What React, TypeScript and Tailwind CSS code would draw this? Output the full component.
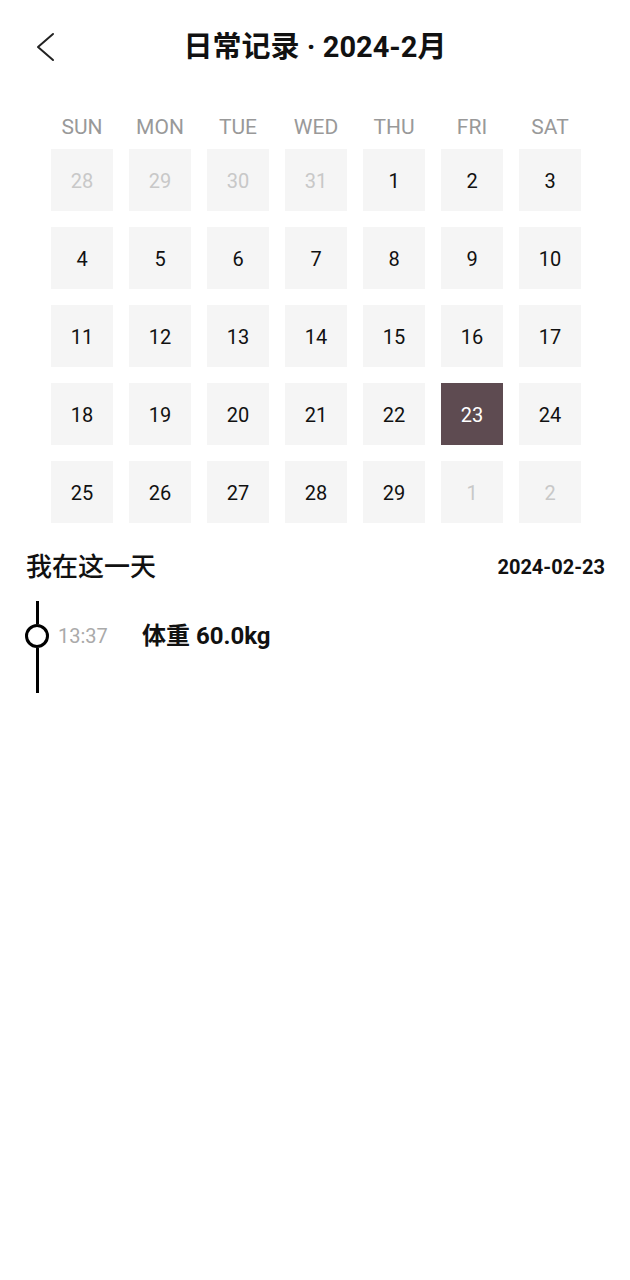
const WEEKDAYS = ['SUN', 'MON', 'TUE', 'WED', 'THU', 'FRI', 'SAT'];

type Day = { n: number; inMonth: boolean };

// 2024年2月，前后补齐相邻月份
const days: Day[] = [
  ...[28, 29, 30, 31].map((n) => ({ n, inMonth: false })),
  ...Array.from({ length: 29 }, (_, i) => ({ n: i + 1, inMonth: true })),
  ...[1, 2].map((n) => ({ n, inMonth: false })),
];

const SELECTED = 23;

function BackIcon() {
  return (
    <svg className="w-[20px] h-[30px]" viewBox="0 0 20 30" fill="none">
      <polyline points="17,2 2,15 17,28" stroke="#222" strokeWidth="2" strokeLinecap="round" strokeLinejoin="round" />
    </svg>
  );
}

export default function App() {
  return (
    <div
      className="min-h-[1280px] w-[630px] bg-white text-[#111]"
      style={{ fontFamily: 'Roboto, "Noto Sans CJK SC", sans-serif' }}
    >
      {/* 顶部标题栏 */}
      <div className="mt-4 grid h-[62px] grid-cols-[1fr_auto_1fr] items-center">
        <button className="ml-[36px] flex items-center justify-self-start">
          <BackIcon />
        </button>
        <h1 className="text-[29px] font-bold leading-none">日常记录 · 2024-2月</h1>
        <div />
      </div>

      {/* 日历 */}
      <div className="ml-[51px] mt-[35px]">
        <div className="grid grid-cols-[repeat(7,62px)] gap-x-4">
          {WEEKDAYS.map((w) => (
            <div key={w} className="flex h-[30px] items-center justify-center text-[21px] text-[#999]">
              {w}
            </div>
          ))}
        </div>
        <div className="mt-[6px] grid grid-cols-[repeat(7,62px)] gap-4">
          {days.map((d, i) => {
            const selected = d.inMonth && d.n === SELECTED;
            return (
              <div
                key={i}
                className={
                  selected
                    ? 'flex h-[62px] items-center justify-center bg-[#5e4b51] pt-[2px] text-[20px] text-white'
                    : d.inMonth
                    ? 'flex h-[62px] items-center justify-center bg-[#f5f5f5] pt-[2px] text-[20px] text-[#111]'
                    : 'flex h-[62px] items-center justify-center bg-[#f5f5f5] pt-[2px] text-[20px] text-[#c8c8c8]'
                }
              >
                {d.n}
              </div>
            );
          })}
        </div>
      </div>

      {/* 我在这一天 */}
      <div className="mt-[26px] flex h-[36px] items-center justify-between pl-[26px] pr-[25px]">
        <span className="text-[26px] font-medium">我在这一天</span>
        <span className="text-[20px] font-bold">2024-02-23</span>
      </div>

      <div className="mt-4 flex items-start pl-[25px]">
        <div className="flex w-6 flex-col items-center">
          <div className="h-[23px] w-[3px] bg-black" />
          <div className="h-6 w-6 rounded-full border-[3px] border-black bg-white" />
          <div className="h-[45px] w-[3px] bg-black" />
        </div>
        <div className="ml-[9px] mt-[23px] flex h-6 items-center">
          <span className="w-[84px] text-[20px] text-[#aaa]">13:37</span>
          <span className="text-[24px] font-bold">体重 60.0kg</span>
        </div>
      </div>
    </div>
  );
}
